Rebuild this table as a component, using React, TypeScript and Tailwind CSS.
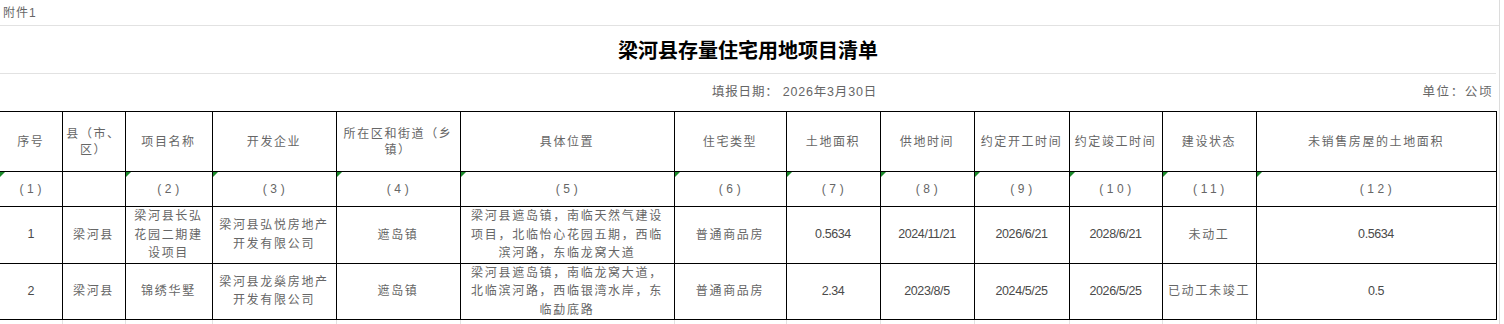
import React from 'react';

const font = "font-['Liberation_Sans','Noto_Sans_CJK_SC',sans-serif]";

// 列宽，与原表一致
const widths = [62, 63, 87, 124, 124, 214, 112, 94, 94, 95, 93, 94, 240];

const headers: string[][] = [
  ['序号'],
  ['县（市、', '区）'],
  ['项目名称'],
  ['开发企业'],
  ['所在区和街道（乡', '镇）'],
  ['具体位置'],
  ['住宅类型'],
  ['土地面积'],
  ['供地时间'],
  ['约定开工时间'],
  ['约定竣工时间'],
  ['建设状态'],
  ['未销售房屋的土地面积'],
];

const codes = ['(1)', '', '(2)', '(3)', '(4)', '(5)', '(6)', '(7)', '(8)', '(9)', '(10)', '(11)', '(12)'];

type Cell = { lines: string[]; num?: boolean };

const rows: Cell[][] = [
  [
    { lines: ['1'], num: true },
    { lines: ['梁河县'] },
    { lines: ['梁河县长弘', '花园二期建', '设项目'] },
    { lines: ['梁河县弘悦房地产', '开发有限公司'] },
    { lines: ['遮岛镇'] },
    { lines: ['梁河县遮岛镇，南临天然气建设', '项目，北临怡心花园五期，西临', '滨河路，东临龙窝大道'] },
    { lines: ['普通商品房'] },
    { lines: ['0.5634'], num: true },
    { lines: ['2024/11/21'], num: true },
    { lines: ['2026/6/21'], num: true },
    { lines: ['2028/6/21'], num: true },
    { lines: ['未动工'] },
    { lines: ['0.5634'], num: true },
  ],
  [
    { lines: ['2'], num: true },
    { lines: ['梁河县'] },
    { lines: ['锦绣华墅'] },
    { lines: ['梁河县龙燊房地产', '开发有限公司'] },
    { lines: ['遮岛镇'] },
    { lines: ['梁河县遮岛镇，南临龙窝大道，', '北临滨河路，西临银湾水岸，东', '临勐底路'] },
    { lines: ['普通商品房'] },
    { lines: ['2.34'], num: true },
    { lines: ['2023/8/5'], num: true },
    { lines: ['2024/5/25'], num: true },
    { lines: ['2026/5/25'], num: true },
    { lines: ['已动工未竣工'] },
    { lines: ['0.5'], num: true },
  ],
];

const cellBase = 'border border-black p-0 text-center align-middle';

export default function App() {
  return (
    <div className={`w-[1504px] h-[324px] overflow-hidden bg-white ${font}`}>
      <div className="w-[1500px] border-r border-[#dcdcdc]">
        {/* 附件 */}
        <div className="h-[26px] border-b border-[#e2e2e2] flex items-center pl-[3px] text-[12px] tracking-[1px] text-[#666]">
          附件1
        </div>

        {/* 标题 */}
        <div className="h-[48px] border-b border-[#e2e2e2] w-[1496px] flex items-center justify-center">
          <h1 className="text-[20px] font-bold text-black font-['Noto_Sans_CJK_SC',serif]">
            梁河县存量住宅用地项目清单
          </h1>
        </div>

        {/* 填报日期 / 单位 */}
        <div className="h-[37px] w-[1496px] flex items-center justify-between text-[12.5px] text-[#666]">
          <span className="ml-[712px] tracking-[0.8px]">
            填报日期：&nbsp;2026年3月30日
          </span>
          <span className="mr-[3px] tracking-[1.6px]">单位：公顷</span>
        </div>

        <table className="table-fixed border-collapse w-[1496px]">
          <colgroup>
            {widths.map((w, i) => (
              <col key={i} style={{ width: w }} />
            ))}
          </colgroup>
          <tbody>
            <tr className="h-[60px]">
              {headers.map((h, i) => (
                <td key={i} className={`${cellBase} ${i === 0 ? 'border-l-0' : ''} text-[12px] leading-[16px] tracking-[1.6px] text-[#666]`}>
                  {h.map((l, j) => (
                    <div key={j} className="whitespace-nowrap">{l}</div>
                  ))}
                </td>
              ))}
            </tr>
            <tr className="h-[35px]">
              {codes.map((c, i) => (
                <td key={i} className={`${cellBase} ${i === 0 ? 'border-l-0' : ''} relative text-[12px] tracking-[3.6px] text-[#666]`}>
                  {c && (
                    <span className="absolute left-0 top-0 w-0 h-0 border-t-[5px] border-r-[5px] border-t-[#1a8a2a] border-r-transparent" />
                  )}
                  <span className="pl-[3px]">{c}</span>
                </td>
              ))}
            </tr>
            {rows.map((r, ri) => (
              <tr key={ri} className="h-[56px]">
                {r.map((cell, i) => (
                  <td
                    key={i}
                    className={`${cellBase} ${i === 0 ? 'border-l-0' : ''} ${
                      cell.num
                        ? 'text-[12.5px] tracking-[-0.4px] text-[#4a4a4a]'
                        : 'text-[12px] leading-[18.5px] tracking-[1.7px] text-[#666]'
                    }`}
                  >
                    {cell.lines.map((l, j) => (
                      <div key={j} className="whitespace-nowrap">{l}</div>
                    ))}
                  </td>
                ))}
              </tr>
            ))}
            <tr className="h-[8px]">
              {widths.map((_, i) => (
                <td key={i} className={`p-0 border-r border-[#e2e2e2] ${i === widths.length - 1 ? 'border-r-0' : ''}`} />
              ))}
            </tr>
          </tbody>
        </table>
      </div>
    </div>
  );
}
